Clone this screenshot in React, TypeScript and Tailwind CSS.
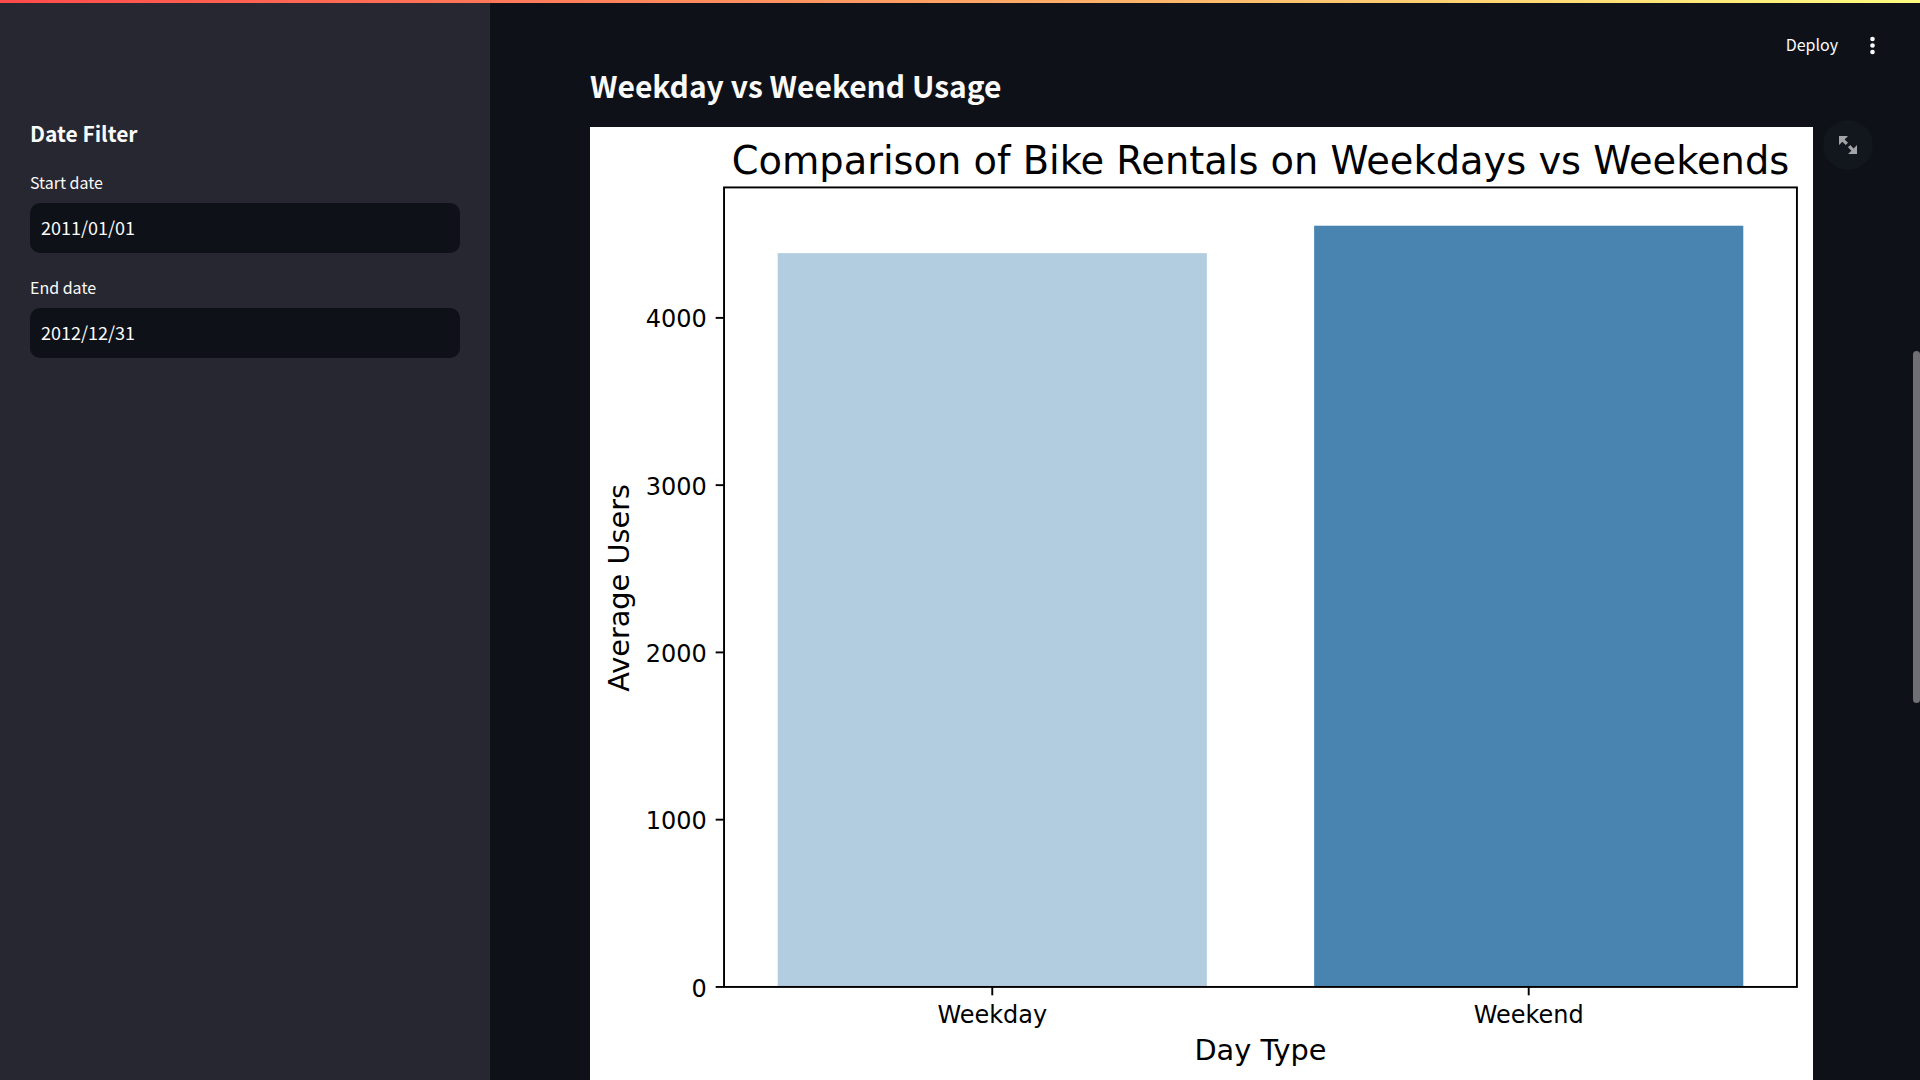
import { useState } from "react";

type Bar = { label: string; value: number; fill: string };

const BARS: Bar[] = [
  { label: "Weekday", value: 4387, fill: "#b2cddf" },
  { label: "Weekend", value: 4551, fill: "#4884af" },
];

const TICKS = [0, 1000, 2000, 3000, 4000];

// Chart units are tenths of a typographic point.
const PLOT = { left: 559, right: 5033, top: 252, bottom: 3586 };
const UNITS_PER_USER = 2790 / 4000;

function UsageChart() {
  const slot = (PLOT.right - PLOT.left) / BARS.length;
  const barWidth = slot * 0.8;
  const yOf = (value: number) => PLOT.bottom - value * UNITS_PER_USER;

  return (
    <svg
      viewBox="0 0 5100 3995"
      role="img"
      aria-label="Comparison of Bike Rentals on Weekdays vs Weekends"
      className="block w-full bg-white font-['DejaVu_Sans',sans-serif]"
    >
      <text x={2796} y={194} textAnchor="middle" className="text-[160px]">
        Comparison of Bike Rentals on Weekdays vs Weekends
      </text>

      {BARS.map((bar, i) => (
        <rect
          key={bar.label}
          x={PLOT.left + i * slot + (slot - barWidth) / 2}
          y={yOf(bar.value)}
          width={barWidth}
          height={bar.value * UNITS_PER_USER}
          fill={bar.fill}
        />
      ))}

      <rect
        x={PLOT.left}
        y={PLOT.top}
        width={PLOT.right - PLOT.left}
        height={PLOT.bottom - PLOT.top}
        fill="none"
        stroke="black"
        strokeWidth={8}
      />

      {TICKS.map((tick) => (
        <g key={tick}>
          <line x1={PLOT.left - 35} x2={PLOT.left} y1={yOf(tick)} y2={yOf(tick)} stroke="black" strokeWidth={8} />
          <text x={PLOT.left - 72} y={yOf(tick) + 40} textAnchor="end" className="text-[100px]">
            {tick}
          </text>
        </g>
      ))}

      {BARS.map((bar, i) => {
        const x = PLOT.left + (i + 0.5) * slot;
        return (
          <g key={bar.label}>
            <line x1={x} x2={x} y1={PLOT.bottom} y2={PLOT.bottom + 35} stroke="black" strokeWidth={8} />
            <text x={x} y={3736} textAnchor="middle" className="text-[100px]">
              {bar.label}
            </text>
          </g>
        );
      })}

      <text x={2796} y={3892} textAnchor="middle" className="text-[120px]">
        Day Type
      </text>
      <text transform="translate(162 1922) rotate(-90)" textAnchor="middle" className="text-[120px]">
        Average Users
      </text>
    </svg>
  );
}

function DateField({ id, label, initial }: { id: string; label: string; initial: string }) {
  const [value, setValue] = useState(initial);
  return (
    <div className="flex flex-col gap-[9px]">
      <label htmlFor={id} className="text-base leading-6">
        {label}
      </label>
      <input
        id={id}
        type="text"
        value={value}
        onChange={(e) => setValue(e.target.value)}
        className="h-[50px] w-full rounded-[10px] bg-[#0e1117] px-[11px] pb-[2px] text-lg outline-none focus:ring-1 focus:ring-[#ff4b4b]"
      />
    </div>
  );
}

export default function App() {
  return (
    <div className="relative flex h-screen overflow-hidden bg-[#0e1117] font-['Noto_Sans_CJK_SC',sans-serif] text-[#fafafa]">
      <div className="absolute inset-x-0 top-0 z-10 h-[3px] bg-linear-[90deg,#ff4b4b,#fffd80]" />

      <aside className="w-[490px] shrink-0 bg-[#262730] px-[30px] pt-[118px]">
        <h2 className="text-[21px] leading-[30px] font-semibold">Date Filter</h2>
        <div className="mt-[22px] flex flex-col gap-[22px]">
          <DateField id="start-date" label="Start date" initial="2011/01/01" />
          <DateField id="end-date" label="End date" initial="2012/12/31" />
        </div>
      </aside>

      <main className="min-w-0 flex-1 pt-[65px] pr-[107px] pl-[100px]">
        <h3 className="text-[30px] leading-10 font-semibold">Weekday vs Weekend Usage</h3>
        <div className="relative mt-[22px]">
          <UsageChart />
          <button
            type="button"
            aria-label="View fullscreen"
            className="absolute -top-[7px] left-full ml-[10px] flex size-[50px] items-center justify-center rounded-full bg-[#12161d] text-[#a3a4a7]"
          >
            <svg viewBox="0 0 8 8" fill="currentColor" className="size-[18px]">
              <path d="M0 0v4l1.5-1.5L3 4l1-1-1.5-1.5L4 0H0zm5 4L4 5l1.5 1.5L4 8h4V4L6.5 5.5 5 4z" />
            </svg>
          </button>
        </div>
      </main>

      <header className="absolute top-[30px] right-[32px] flex items-center gap-5">
        <button type="button" className="pb-[2px] text-base leading-7">
          Deploy
        </button>
        <button type="button" aria-label="Main menu" className="flex size-[30px] items-center justify-center">
          <svg viewBox="0 0 30 30" fill="currentColor" className="size-[30px]">
            <circle cx="14.5" cy="9" r="2.3" />
            <circle cx="14.5" cy="15.5" r="2.3" />
            <circle cx="14.5" cy="22" r="2.3" />
          </svg>
        </button>
      </header>

      <div className="absolute top-[351px] right-0 h-[352px] w-[7px] rounded-full bg-[#6e7074]" />
    </div>
  );
}
